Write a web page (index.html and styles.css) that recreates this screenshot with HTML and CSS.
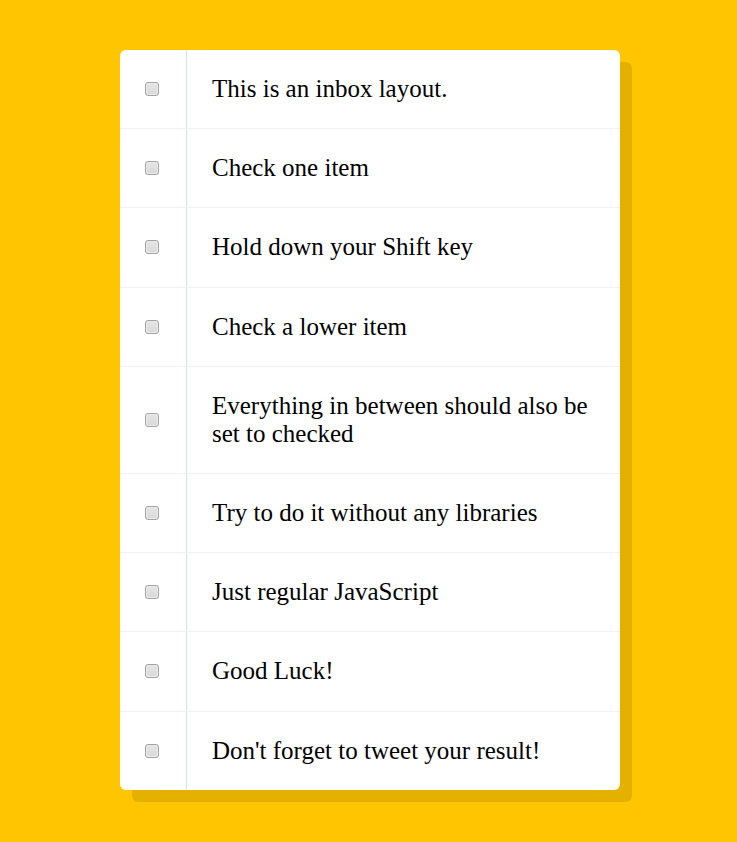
FILE: index.html
```html
<!DOCTYPE html>
<html>
<head>
<meta charset="utf-8">
<title>Hold Shift to Check Multiple Checkboxes</title>
<link rel="stylesheet" href="styles.css">
</head>
<body>
<div class="inbox">
  <div class="item"><input type="checkbox"><p>This is an inbox layout.</p></div>
  <div class="item"><input type="checkbox"><p>Check one item</p></div>
  <div class="item"><input type="checkbox"><p>Hold down your Shift key</p></div>
  <div class="item"><input type="checkbox"><p>Check a lower item</p></div>
  <div class="item"><input type="checkbox"><p>Everything in between should also be set to checked</p></div>
  <div class="item"><input type="checkbox"><p>Try to do it without any libraries</p></div>
  <div class="item"><input type="checkbox"><p>Just regular JavaScript</p></div>
  <div class="item"><input type="checkbox"><p>Good Luck!</p></div>
  <div class="item"><input type="checkbox"><p>Don't forget to tweet your result!</p></div>
</div>
</body>
</html>
```
FILE: styles.css
```css
html {
  font-family: "Liberation Serif", serif;
  background: #ffc600;
}

body {
  margin: 0;
  padding: 0 0 0 3px;
}

.inbox {
  width: 500px;
  margin: 50px auto;
  background: #fff;
  border-radius: 6px;
  box-shadow: 12px 12px 0 rgba(0, 0, 0, 0.1);
}

.item {
  display: flex;
  align-items: center;
  border-bottom: 1px solid #f1f1f1;
}

.item:last-child {
  border-bottom: 0;
}

.item input {
  -webkit-appearance: none;
  appearance: none;
  box-sizing: border-box;
  width: 14px;
  height: 14px;
  margin: 26px 27px 26px 25px;
  flex: none;
  border: 1px solid #a3a3a3;
  border-radius: 3px;
  background: linear-gradient(#e6e6e6, #d8d8d8);
  box-shadow: inset 0 0 0 1px #ececec;
}

.item p {
  margin: 0;
  padding: 25.1px 25px;
  flex: 1;
  font-size: 25px;
  color: #000;
  border-left: 1px solid #d1e2ff;
}
```
